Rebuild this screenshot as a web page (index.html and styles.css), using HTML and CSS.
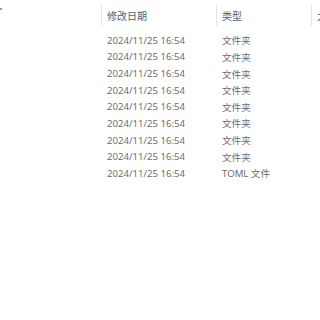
FILE: index.html
```html
<!DOCTYPE html>
<html>
<head>
<meta charset="utf-8">
<link rel="stylesheet" href="styles.css">
</head>
<body>
<div class="view">
  <div class="header">
    <div class="hcell name"><span class="mark"></span></div>
    <div class="hcell sep">修改日期</div>
    <div class="hcell sep">类型</div>
    <div class="hcell sep">大小</div>
  </div>
  <div class="rows">
    <div class="row"><div></div><div>2024/11/25 16:54</div><div>文件夹</div><div></div></div>
    <div class="row"><div></div><div>2024/11/25 16:54</div><div>文件夹</div><div></div></div>
    <div class="row"><div></div><div>2024/11/25 16:54</div><div>文件夹</div><div></div></div>
    <div class="row"><div></div><div>2024/11/25 16:54</div><div>文件夹</div><div></div></div>
    <div class="row"><div></div><div>2024/11/25 16:54</div><div>文件夹</div><div></div></div>
    <div class="row"><div></div><div>2024/11/25 16:54</div><div>文件夹</div><div></div></div>
    <div class="row"><div></div><div>2024/11/25 16:54</div><div>文件夹</div><div></div></div>
    <div class="row"><div></div><div>2024/11/25 16:54</div><div>文件夹</div><div></div></div>
    <div class="row"><div></div><div>2024/11/25 16:54</div><div>TOML 文件</div><div></div></div>
  </div>
</div>
</body>
</html>
```
FILE: styles.css
```css
html, body {
  margin: 0;
  padding: 0;
  background: #ffffff;
}
.view {
  width: 320px;
  height: 320px;
  overflow: hidden;
  font-family: "Noto Sans", "Noto Sans CJK SC", sans-serif;
  font-size: 10px;
}
.header, .row {
  display: grid;
  grid-template-columns: 101px 115px 95px 40px;
  white-space: nowrap;
}
.header {
  height: 32px;
  align-items: stretch;
}
.hcell {
  color: #4c607a;
  display: flex;
  align-items: center;
  padding-left: 5px;
  margin: 5px 0 6px;
  overflow: hidden;
}
.hcell.name {
  padding-left: 0;
  align-items: flex-start;
}
.hcell.sep {
  border-left: 1px solid #e5e5e5;
}
.mark {
  display: block;
  width: 2px;
  height: 2px;
  margin-top: 3px;
  background: #9a9a9a;
}
.row {
  height: 16.625px;
  align-items: center;
  color: #6d6d6d;
  font-size: 9.6px;
}
.row > div {
  padding-left: 6px;
  overflow: hidden;
}
```
